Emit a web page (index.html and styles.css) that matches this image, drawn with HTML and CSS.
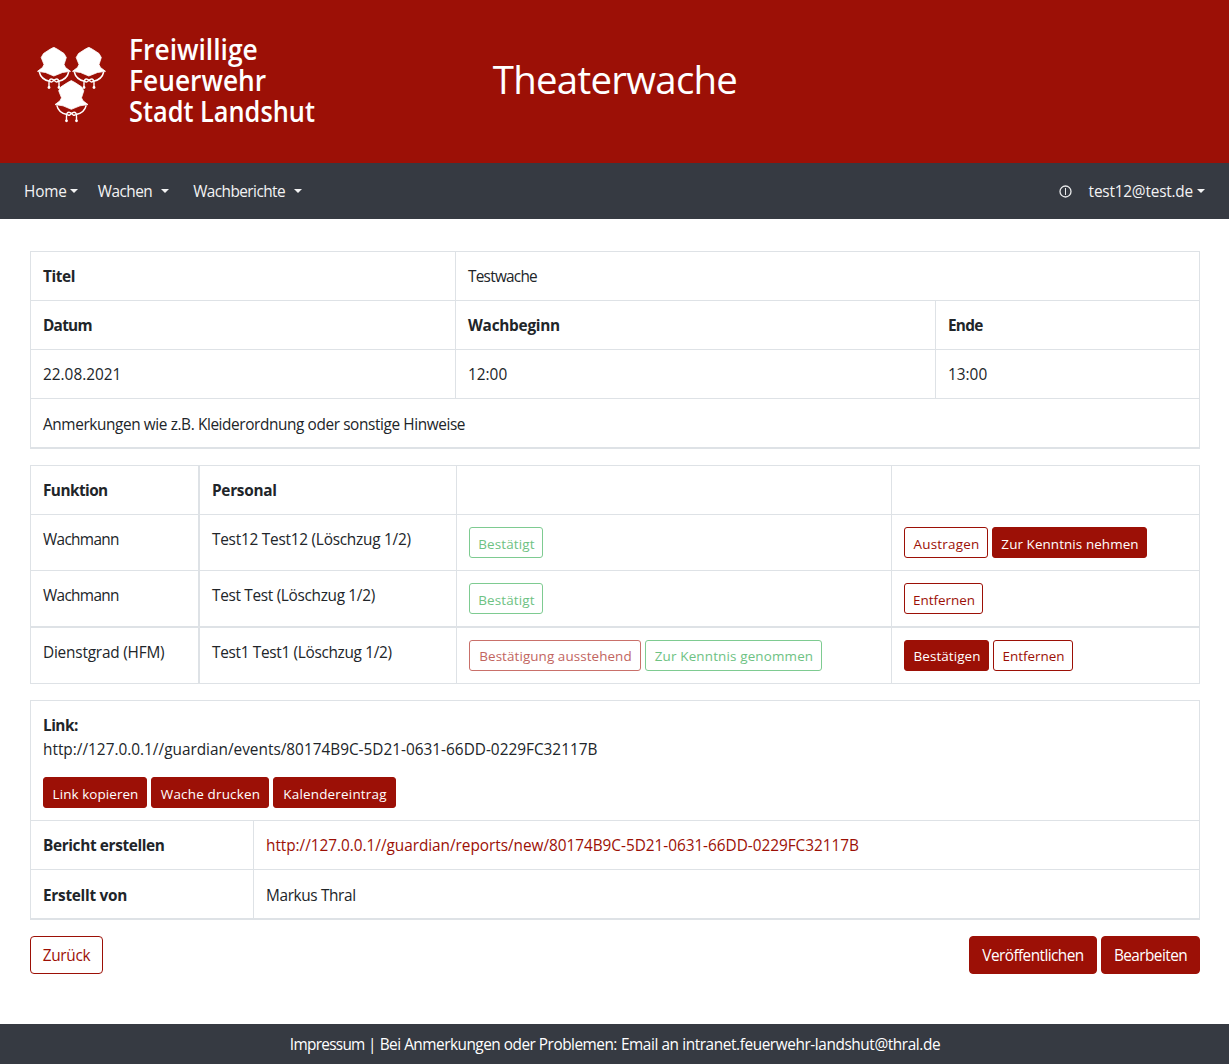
FILE: index.html
```
<!DOCTYPE html>
<html lang="de">
<head>
<meta charset="utf-8">
<title>Theaterwache</title>
<link rel="stylesheet" href="styles.css">
</head>
<body>
<header class="header">
  <div class="logo">
    <svg class="helmets" viewBox="0 0 70 78" width="70" height="78" aria-hidden="true">
      <defs>
        <g id="helmet">
          <path fill="#fff" stroke="#fff" stroke-width=".8" stroke-linejoin="round" d="M16.300 .3 L20 2.300 L26.500 6.500 L28.800 10.500 L26.500 17.500 L28 20.500 L33 24.300 L25 25.500 L16.300 29 L8 25.500 L0 24.300 L5 20.500 L6.500 17.500 L3.700 10.500 L6 6.500 L12.500 2.300 Z"/>
          <path fill="none" stroke="#fff" stroke-width="1.500" d="M1.800 25 Q3.500 32.500 12 34.300 M31.200 25 Q29.500 32.500 21 34.300"/>
          <path fill="none" stroke="#fff" stroke-width="1.400" d="M11.500 41 V36 Q11.500 32 14 32 Q15.500 32 18 34.500 Q19.500 35.500 20.500 34 M21.500 41 V36 Q21.500 32 19 32 Q17.500 32 15 34.500 Q13.500 35.500 12.500 34"/>
          <circle cx="11.500" cy="40.500" r="1.400" fill="#fff"/>
          <circle cx="21.500" cy="40.500" r="1.400" fill="#fff"/>
        </g>
      </defs>
      <use href="#helmet" x=".5" y="0"/>
      <use href="#helmet" x="35.500" y="0"/>
      <use href="#helmet" x="18" y="33.300"/>
    </svg>
    <div class="logo-text">
      <div class="line1">Freiwillige</div>
      <div class="line2">Feuerwehr</div>
      <div class="line3">Stadt Landshut</div>
    </div>
  </div>
  <h1 class="title">Theaterwache</h1>
</header>

<nav class="nav">
  <a class="nav-link home"><span class="k15">Home</span><i class="caret"></i></a>
  <a class="nav-link wachen"><span class="k50">Wachen</span><i class="caret wide"></i></a>
  <a class="nav-link"><span class="k55">Wachberichte</span><i class="caret wide"></i></a>
  <a class="nav-link info">
    <svg width="13" height="13" viewBox="0 0 13 13" fill="none" stroke="#e9eaeb"><circle cx="6.500" cy="6.500" r="5.500" stroke-width="1.300"/><path d="M6.500 3V10"/></svg>
  </a>
  <a class="nav-link"><span class="k20">test12@test.de</span><i class="caret"></i></a>
</nav>

<main class="main">
  <table class="table event">
    <colgroup><col class="e1"><col class="e2"><col class="e3"></colgroup>
    <tr><th><span class="k40">Titel</span></th><td colspan="2"><span class="k75">Testwache</span></td></tr>
    <tr><th><span class="k75">Datum</span></th><th><span class="k25">Wachbeginn</span></th><th><span class="k75">Ende</span></th></tr>
    <tr><td>22.08.2021</td><td>12:00</td><td>13:00</td></tr>
    <tr class="last"><td colspan="3"><span class="k38">Anmerkungen wie z.B. Kleiderordnung oder sonstige Hinweise</span></td></tr>
  </table>

  <table class="table staff">
    <colgroup><col class="s1"><col class="s2"><col class="s3"><col class="s4"></colgroup>
    <tr><th><span class="k55">Funktion</span></th><th><span class="k27">Personal</span></th><th></th><th></th></tr>
    <tr class="tall"><td><span class="k65">Wachmann</span></td><td><span class="k23">Test12 Test12 (Löschzug 1/2)</span></td>
      <td><div class="buttons"><span class="btn sm green w74 p18">Bestätigt</span></div></td>
      <td><div class="buttons"><a class="btn sm outline w84 p26">Austragen</a><a class="btn sm solid w155 p10">Zur Kenntnis nehmen</a></div></td></tr>
    <tr class="tall thick"><td><span class="k65">Wachmann</span></td><td><span class="k30">Test Test (Löschzug 1/2)</span></td>
      <td><div class="buttons"><span class="btn sm green w74 p18">Bestätigt</span></div></td>
      <td><div class="buttons"><a class="btn sm outline w79">Entfernen</a></div></td></tr>
    <tr class="tall"><td><span class="k20">Dienstgrad (HFM)</span></td><td><span class="k30">Test1 Test1 (Löschzug 1/2)</span></td>
      <td><div class="buttons"><span class="btn sm pending w172 p10">Bestätigung ausstehend</span><span class="btn sm green w177 p18">Zur Kenntnis genommen</span></div></td>
      <td><div class="buttons"><a class="btn sm solid w85 p10">Bestätigen</a><a class="btn sm outline w80">Entfernen</a></div></td></tr>
  </table>

  <table class="table links">
    <colgroup><col class="l1"><col class="l2"></colgroup>
    <tr class="link-row"><td colspan="2"><b class="k50">Link:</b><br><span>http://127.0.0.1//guardian/events/80174B9C-5D21-0631-66DD-0229FC32117B</span>
      <div class="buttons actions"><a class="btn sm solid w104 p10">Link kopieren</a><a class="btn sm solid w118 p23">Wache drucken</a><a class="btn sm solid w123 p23">Kalendereintrag</a></div></td></tr>
    <tr><th><span class="k37">Bericht erstellen</span></th><td><a class="link k04">http://127.0.0.1//guardian/reports/new/80174B9C-5D21-0631-66DD-0229FC32117B</a></td></tr>
    <tr class="last"><th><span class="k27">Erstellt von</span></th><td><span class="k37">Markus Thral</span></td></tr>
  </table>

  <div class="toolbar">
    <a class="btn outline w73 k27">Zurück</a>
    <div class="buttons"><a class="btn solid w128 k55">Veröffentlichen</a><a class="btn solid w99 k55">Bearbeiten</a></div>
  </div>
</main>

<footer class="footer"><span class="imprint">Impressum |</span> <span class="contact">Bei Anmerkungen oder Problemen:</span> <span class="k40">Email an intranet.feuerwehr-landshut@thral.de</span></footer>
</body>
</html>
```
FILE: styles.css
```
* { box-sizing: border-box; }
body {
  margin: 0;
  min-height: 1064px;
  display: flex;
  flex-direction: column;
  background: #fff;
  color: #212529;
  font: 15.36px/24px "Open Sans", sans-serif;
}

/* Header */
.header {
  height: 163px;
  background: #9c1006;
  color: #fff;
  display: grid;
  grid-template-columns: 1fr auto 1fr;
}
.logo { display: flex; padding-left: 36.5px; }
.helmets { margin-top: 47px; }
.logo-text {
  margin: 34px 0 0 22px;
  font-size: 28px;
  line-height: 31px;
  font-weight: 600;
  white-space: nowrap;
}
.logo-text div { width: max-content; transform-origin: left; }
.logo-text .line1 { transform: scaleX(.942); }
.logo-text .line2 { transform: scaleX(.94); }
.logo-text .line3 { transform: scaleX(.905); }
.title {
  margin: 0;
  padding: 55px 0 0 1px;
  font-size: 38.4px;
  line-height: 48px;
  font-weight: 400;
  letter-spacing: -0.72px;
}

/* Navigation */
.nav {
  height: 56px;
  padding: 0 24px;
  display: flex;
  align-items: center;
  background: #363a42;
  color: #f3f3f4;
}
.nav-link { display: flex; align-items: center; margin-right: 20px; white-space: nowrap; }
.nav-link span { padding-top: 2px; }
.nav-link.wachen { margin-right: 24px; }
.nav-link:last-child { margin-right: 0; }
.nav-link.info { margin-left: auto; margin-right: 17px; }
.caret {
  margin-left: 4px;
  border: 4px solid transparent;
  border-top-color: currentColor;
  border-bottom: 0;
}
.home .caret { margin-left: 3px; }
.caret.wide { margin-left: 9px; }

/* Tables */
.main { flex: 1; padding: 32px 29px 0 30px; }
.table {
  width: 1170px;
  margin: 0 0 16px;
  table-layout: fixed;
  border-collapse: separate;
  border-spacing: 0;
  border: solid #dee2e6;
  border-width: 1px 0 0 1px;
}
.table th, .table td {
  height: 49px;
  padding: 13px 12px 0;
  text-align: left;
  vertical-align: top;
  border: solid #dee2e6;
  border-width: 0 1px 1px 0;
}
.table .last > * { height: 50px; padding-top: 14px; border-bottom-width: 2px; }
.table .tall > * { height: 56px; }
.table .tall > :nth-child(n+3) { padding-top: 12px; }
.table .thick > * { height: 57px; border-bottom-width: 2px; }
.staff tr > :first-child { border-right-width: 2px; }
.table .link-row > * { height: 120px; }
.e1 { width: 425px; } .e2 { width: 480px; } .e3 { width: 264px; }
.s1 { width: 169px; } .s2 { width: 257px; } .s3 { width: 435px; } .s4 { width: 308px; }
.l1 { width: 223px; } .l2 { width: 946px; }
.link { color: #9c1006; }

/* Buttons */
.buttons { display: flex; gap: 4px; }
.actions { margin-top: 15px; }
.btn {
  height: 38px;
  display: flex;
  justify-content: center;
  padding: 7px 0 0;
  border: 1px solid #9c1006;
  border-radius: 4px;
  white-space: nowrap;
}
.btn.sm { height: 31px; padding: 6px 0 0 1px; font-size: 13.44px; line-height: 21px; border-radius: 3px; }
.thick + .tall .btn.sm { padding-top: 5px; }
.outline { color: #9c1006; }
.solid { background: #9c1006; color: #fff; }
.btn.green { color: #6ec283; border-color: #7ecb91; }
.btn.pending { color: #c2655f; border-color: #c9706a; }
.w73 { width: 73px; } .w74 { width: 74px; } .w79 { width: 79px; } .w80 { width: 80px; } .w84 { width: 84px; }
.w85 { width: 85px; } .w99 { width: 99px; } .w104 { width: 104px; } .w118 { width: 118px; }
.w123 { width: 123px; } .w128 { width: 128px; } .w155 { width: 155px; }
.w172 { width: 172px; } .w177 { width: 177px; }

.toolbar { display: flex; justify-content: space-between; }

/* Footer */
.footer {
  height: 40px;
  padding: 1px 0 0 1px;
  background: #363a42;
  color: #fff;
  text-align: center;
  line-height: 40px;
}
.imprint { letter-spacing: -0.7px; }
.contact { letter-spacing: -0.49px; }

/* Letter spacing steps */
.k04 { letter-spacing: -0.036px; }
.k15 { letter-spacing: -0.16px; }
.k20 { letter-spacing: -0.2px; }
.k23 { letter-spacing: -0.235px; }
.k25 { letter-spacing: -0.25px; }
.k27 { letter-spacing: -0.275px; }
.k30 { letter-spacing: -0.31px; }
.k37 { letter-spacing: -0.36px; }
.k38 { letter-spacing: -0.392px; }
.k40 { letter-spacing: -0.41px; }
.k50 { letter-spacing: -0.52px; }
.k55 { letter-spacing: -0.56px; }
.k65 { letter-spacing: -0.655px; }
.k75 { letter-spacing: -0.75px; }
.p10 { letter-spacing: 0.08px; }
.p18 { letter-spacing: 0.15px; }
.p23 { letter-spacing: 0.2px; }
.p26 { letter-spacing: 0.24px; }
```
